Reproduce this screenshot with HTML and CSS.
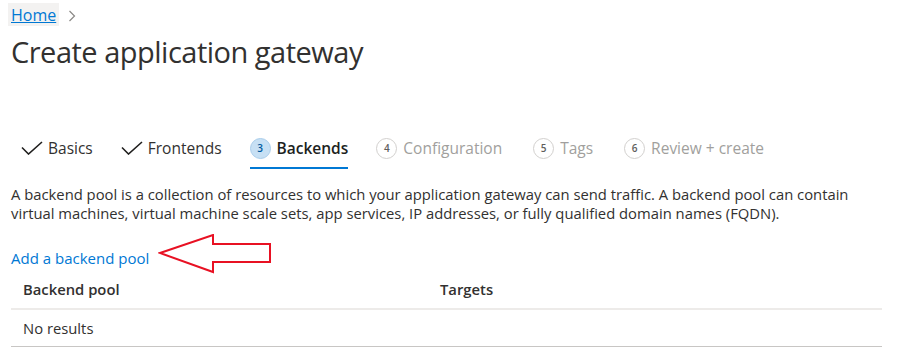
FILE: index.html
```html
<!DOCTYPE html>
<html lang="en">
<head>
  <meta charset="UTF-8">
  <title>Create application gateway</title>
  <link rel="stylesheet" href="styles.css">
</head>
<body>
  <div class="page">
    <!-- Breadcrumb -->
    <nav class="breadcrumb">
      <a class="crumb" href="#">Home</a>
      <svg class="chevron" width="8" height="12" viewBox="0 0 8 12"><path d="M1.5 1 L6.5 6 L1.5 11" fill="none" stroke="#8a8886" stroke-width="1.2"/></svg>
    </nav>

    <h1 class="title">Create application gateway</h1>

    <!-- Wizard steps -->
    <div class="steps">
      <div class="step done">
        <svg class="check" width="22" height="14" viewBox="0 0 22 14"><path d="M1 6.5 L7.5 13 L21 1" fill="none" stroke="#201f1e" stroke-width="1.6"/></svg>
        <span>Basics</span>
      </div>
      <div class="step done">
        <svg class="check" width="22" height="14" viewBox="0 0 22 14"><path d="M1 6.5 L7.5 13 L21 1" fill="none" stroke="#201f1e" stroke-width="1.6"/></svg>
        <span>Frontends</span>
      </div>
      <div class="step active">
        <span class="num">3</span>
        <span>Backends</span>
      </div>
      <div class="step todo">
        <span class="num">4</span>
        <span>Configuration</span>
      </div>
      <div class="step todo">
        <span class="num">5</span>
        <span>Tags</span>
      </div>
      <div class="step todo">
        <span class="num">6</span>
        <span>Review + create</span>
      </div>
    </div>

    <p class="desc">A backend pool is a collection of resources to which your application gateway can send traffic. A backend pool can contain virtual machines, virtual machine scale sets, app services, IP addresses, or fully qualified domain names (FQDN).</p>

    <div class="add-row">
      <a class="add-link" href="#">Add a backend pool</a>
      <svg class="callout" width="116" height="40" viewBox="0 0 116 40"><path d="M2 19 L55 1 L55 10 L112 10 L112 28 L55 28 L55 38 Z" fill="none" stroke="#e81123" stroke-width="2" stroke-linejoin="miter"/></svg>
    </div>

    <div class="grid">
      <div class="grid-row head">
        <div class="cell col-pool">Backend pool</div>
        <div class="cell">Targets</div>
      </div>
      <div class="grid-row body">
        <div class="cell col-pool">No results</div>
        <div class="cell"></div>
      </div>
    </div>
  </div>
</body>
</html>
```

FILE: styles.css
```css
/* General */
body {
  margin: 0;
  background: #fff;
  color: #323130;
  font-family: 'Open Sans', 'Noto Sans', sans-serif;
}

.page {
  padding: 3px 15px 0 11px;
}

/* Breadcrumb */
.breadcrumb {
  display: flex;
  align-items: center;
  gap: 9px;
  margin-left: -3px;
}

.crumb {
  background: #f3f2f1;
  color: #0078d4;
  font-size: 16px;
  line-height: 23px;
  padding: 1px 3px 0;
  height: 22px;
  text-decoration: underline;
}

.chevron {
  margin-top: 2px;
}

.title {
  font-size: 29px;
  font-weight: 400;
  letter-spacing: -0.5px;
  line-height: 40px;
  margin: 6px 0 0;
}

/* Steps */
.steps {
  display: flex;
  margin-top: 63px;
  padding-left: 10px;
}

.step {
  display: flex;
  align-items: center;
  font-size: 15.5px;
  height: 26px;
  padding-bottom: 6px;
  margin-right: 28px;
  border-bottom: 2px solid transparent;
}

.step.done {
  color: #323130;
}

.step .check {
  margin-right: 5px;
}

.step.active {
  border-bottom-color: #0078d4;
  color: #201f1e;
  font-weight: 600;
}

.step.todo {
  color: #a19f9d;
  margin-right: 31px;
}

.num {
  width: 19px;
  height: 19px;
  margin-right: 6px;
  border-radius: 50%;
  border: 1px solid #d2d0ce;
  font-size: 10px;
  font-weight: 600;
  display: flex;
  align-items: center;
  justify-content: center;
  color: #605e5c;
}

.step.active .num {
  background: #c7e0f4;
  border-color: #a9cdeb;
  color: #005a9e;
}

/* Description */
.desc {
  font-size: 14.8px;
  line-height: 19px;
  margin: 16px 0 0;
}

/* Add link */
.add-row {
  display: flex;
  align-items: center;
  margin-top: 23px;
}

.add-link {
  color: #0078d4;
  text-decoration: none;
  font-size: 15px;
  line-height: 20px;
}

.callout {
  margin: -12px 0 -4px 9px;
}

/* Grid */
.grid {
  width: 871px;
}

.grid-row {
  display: flex;
  align-items: center;
  font-size: 14.8px;
}

.grid-row.head {
  font-weight: 600;
  height: 38px;
  border-bottom: 2px solid #edebe9;
}

.grid-row.body {
  height: 36px;
  border-bottom: 1px solid #c8c6c4;
}

.cell {
  padding-left: 12px;
}

.col-pool {
  width: 405px;
}
```
